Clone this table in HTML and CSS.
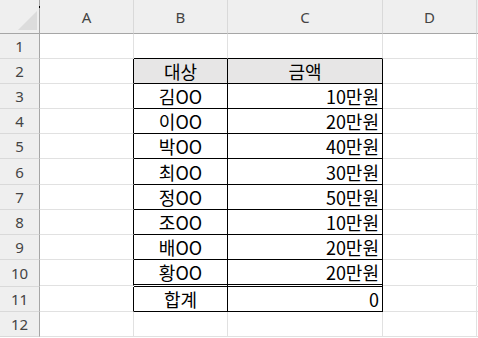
FILE: index.html
```html
<!DOCTYPE html>
<html lang="ko">
<head>
<meta charset="utf-8">
<title>Sheet</title>
<link rel="stylesheet" href="styles.css">
</head>
<body>
<div class="sheet">
  <!-- header row -->
  <div class="corner"><svg width="19" height="19" viewBox="0 0 19 19"><polygon points="19,0 19,19 0,19" fill="#dcdcdc"/></svg></div>
  <div class="ch">A</div>
  <div class="ch">B</div>
  <div class="ch">C</div>
  <div class="ch">D</div>
  <div class="chf"></div>

  <!-- row 1 -->
  <div class="rh">1</div>
  <div class="c"></div>
  <div class="c tt"></div>
  <div class="c tt"></div>
  <div class="c"></div>
  <div class="f"></div>

  <!-- row 2 -->
  <div class="rh">2</div>
  <div class="c tl"></div>
  <div class="t hd ctr">대상</div>
  <div class="t hd ctr">금액</div>
  <div class="c"></div>
  <div class="f"></div>

  <div class="rh">3</div>
  <div class="c tl"></div>
  <div class="t ctr">김OO</div>
  <div class="t num">10만원</div>
  <div class="c"></div>
  <div class="f"></div>

  <div class="rh">4</div>
  <div class="c tl"></div>
  <div class="t ctr">이OO</div>
  <div class="t num">20만원</div>
  <div class="c"></div>
  <div class="f"></div>

  <div class="rh">5</div>
  <div class="c tl"></div>
  <div class="t ctr">박OO</div>
  <div class="t num">40만원</div>
  <div class="c"></div>
  <div class="f"></div>

  <div class="rh">6</div>
  <div class="c tl"></div>
  <div class="t ctr">최OO</div>
  <div class="t num">30만원</div>
  <div class="c"></div>
  <div class="f"></div>

  <div class="rh">7</div>
  <div class="c tl"></div>
  <div class="t ctr">정OO</div>
  <div class="t num">50만원</div>
  <div class="c"></div>
  <div class="f"></div>

  <div class="rh">8</div>
  <div class="c tl"></div>
  <div class="t ctr">조OO</div>
  <div class="t num">10만원</div>
  <div class="c"></div>
  <div class="f"></div>

  <div class="rh">9</div>
  <div class="c tl"></div>
  <div class="t ctr">배OO</div>
  <div class="t num">20만원</div>
  <div class="c"></div>
  <div class="f"></div>

  <div class="rh">10</div>
  <div class="c tl short"></div>
  <div class="t dbl ctr">황OO</div>
  <div class="t dbl num">20만원</div>
  <div class="c short"></div>
  <div class="f"></div>

  <div class="rh">11</div>
  <div class="c tl"></div>
  <div class="t ctr">합계</div>
  <div class="t num">0</div>
  <div class="c"></div>
  <div class="f"></div>

  <div class="rh">12</div>
  <div class="c"></div>
  <div class="c"></div>
  <div class="c"></div>
  <div class="c"></div>
  <div class="f"></div>
</div>
</body>
</html>
```

FILE: styles.css
```css
html, body {
  margin: 0;
  padding: 0;
  background: #ffffff;
}

.sheet {
  width: 478px;
  height: 338px;
  display: grid;
  grid-template-columns: 40px 94px 94px 155px 94px 1fr;
  grid-template-rows: 34px 25px 25px 25px 25px 25px 26px 25px 25px 25px 27px 25px 25px 1fr;
  background: #ffffff;
  overflow: hidden;
  font-family: "Noto Sans CJK KR", "Noto Sans", sans-serif;
  color: #000;
}

.sheet > div {
  box-sizing: border-box;
}

.corner {
  position: relative;
  background: #efefef;
  border-right: 1px solid #a6a6a6;
  border-bottom: 1px solid #a6a6a6;
  display: flex;
  align-items: flex-end;
  justify-content: flex-end;
  padding: 0 2px 3px 0;
}

.corner svg {
  display: block;
}

.corner::after {
  content: "";
  position: absolute;
  left: 39px;
  top: 6px;
  width: 1px;
  height: 2px;
  background: #000;
}

.ch {
  background: #efefef;
  border-right: 1px solid #d9d9d9;
  border-bottom: 1px solid #a6a6a6;
  display: flex;
  align-items: center;
  justify-content: center;
  font-family: "Noto Sans", sans-serif;
  font-size: 15px;
  color: #444;
  padding-top: 1px;
}

.chf {
  background: #efefef;
  border-bottom: 1px solid #a6a6a6;
}

.rh {
  background: #efefef;
  border-right: 1px solid #a6a6a6;
  border-bottom: 1px solid #d9d9d9;
  display: flex;
  align-items: center;
  justify-content: center;
  font-family: "Noto Sans", sans-serif;
  font-size: 15px;
  color: #444;
}

.c {
  border-right: 1px solid #e1e1e1;
  border-bottom: 1px solid #e1e1e1;
}

.c.tl {
  border-right-color: #000;
}

.c.tt {
  border-bottom-color: #000;
}

.c.short {
  margin-bottom: 1px;
}

.f {
  border-bottom: 1px solid #e1e1e1;
}

.t {
  border-right: 1px solid #000;
  border-bottom: 1px solid #000;
  display: flex;
  align-items: center;
  font-size: 18px;
  line-height: 1;
  white-space: nowrap;
}

.t.dbl {
  border-bottom: 3px double #000;
}

.hd {
  background: #e7e6e6;
}

.ctr {
  justify-content: center;
}

.num {
  justify-content: flex-end;
  padding-right: 3px;
}
```
